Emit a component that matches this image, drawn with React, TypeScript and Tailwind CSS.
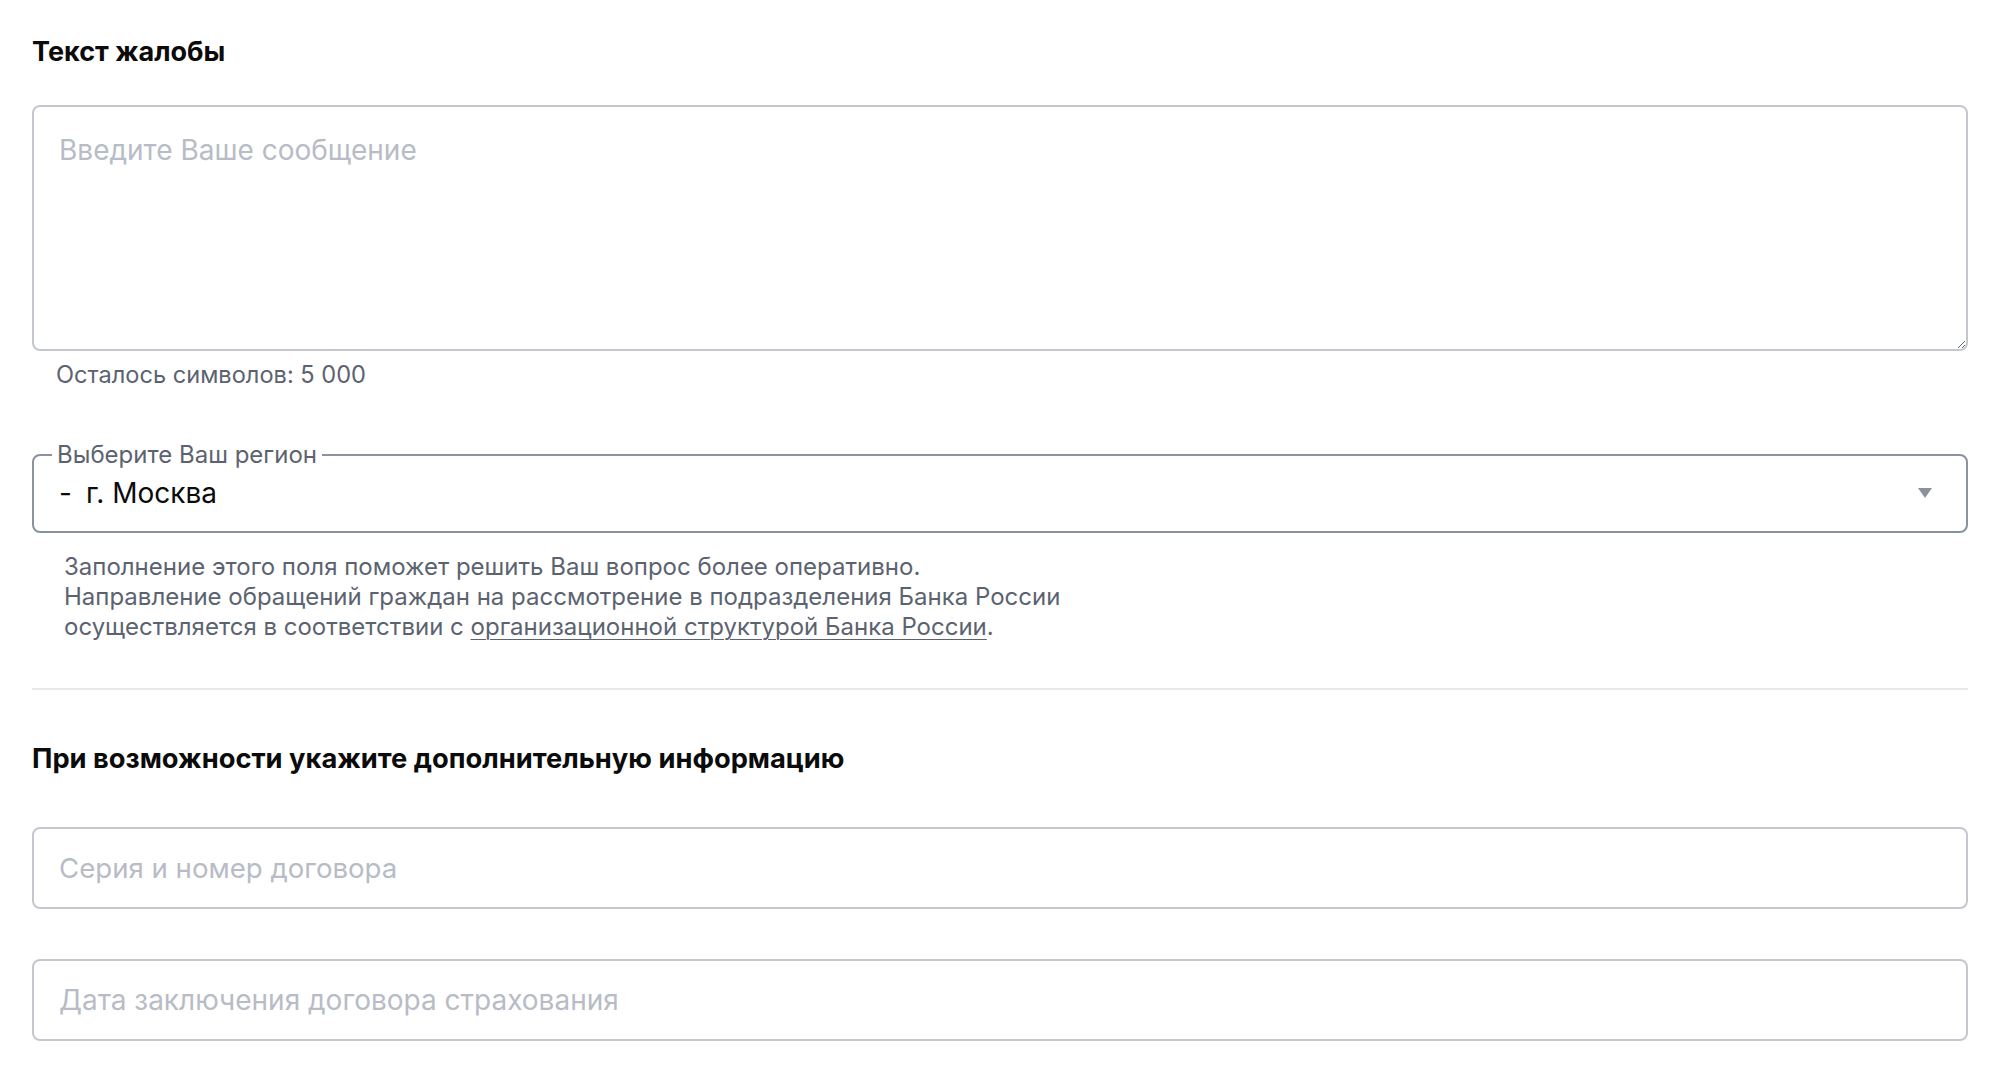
import React from "react";

export default function App() {
  return (
    <div className="min-h-screen bg-white font-['Inter','Liberation_Sans',sans-serif] text-[#0b0b0b]">
      <div className="px-8 pt-9 pb-10">
        {/* Complaint text */}
        <h2 className="text-[27px] leading-8 font-bold">Текст жалобы</h2>

        <textarea
          className="mt-[37px] block w-full h-[246px] rounded-lg border-2 border-[#c4c8ce] px-[25px] pt-[25px] text-[28px] leading-9 outline-none placeholder:text-[#b7bcc6]"
          placeholder="Введите Ваше сообщение"
        />
        <p className="mt-[9px] pl-6 text-[23.6px] leading-[30px] text-[#5c6370]">Осталось символов: 5 000</p>

        {/* Region select */}
        <fieldset className="mt-[53px] rounded-lg border-2 border-[#8b929d] px-[25px] pb-[7px]">
          <legend className="ml-[-7px] px-[5px] text-[24px] leading-6 text-[#5c6370]">Выберите Ваш регион</legend>
          <div className="flex h-[57px] items-center justify-between pb-[5px]">
            <span className="text-[28px] leading-9 text-[#0b0b0b]">
              <span className="mr-[14px]">-</span>г. Москва
            </span>
            <svg width="16" height="12" viewBox="0 0 16 12" className="mr-[8px]">
              <path d="M1 1h14L8 11z" fill="#8b929d" />
            </svg>
          </div>
        </fieldset>

        <p className="mt-[19px] pl-8 text-[24px] leading-[30px] text-[#5c6370]">
          Заполнение этого поля поможет решить Ваш вопрос более оперативно.
          <br />
          Направление обращений граждан на рассмотрение в подразделения Банка России
          <br />
          осуществляется в соответствии с{" "}
          <a href="#" className="underline underline-offset-4 decoration-1">
            организационной структурой Банка России
          </a>
          .
        </p>

        <div className="mt-[46px] h-[2px] bg-[#e8e8e8]" />

        {/* Additional info */}
        <h2 className="mt-[53px] text-[27.3px] leading-8 font-bold">
          При возможности укажите дополнительную информацию
        </h2>

        <input
          className="mt-[52px] block w-full h-[82px] rounded-lg border-2 border-[#c4c8ce] px-[25px] text-[27.6px] outline-none placeholder:text-[#b7bcc6]"
          placeholder="Серия и номер договора"
        />
        <input
          className="mt-[50px] block w-full h-[82px] rounded-lg border-2 border-[#c4c8ce] px-[25px] text-[28px] outline-none placeholder:text-[#b7bcc6]"
          placeholder="Дата заключения договора страхования"
        />
      </div>
    </div>
  );
}
